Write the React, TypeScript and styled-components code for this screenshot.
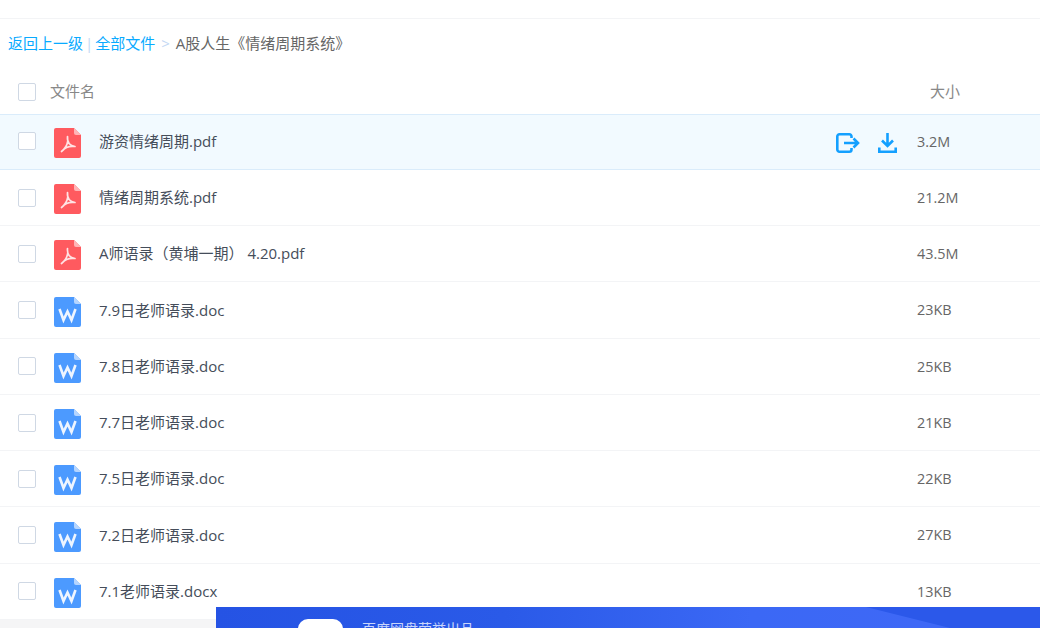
import React from 'react';
import styled, { createGlobalStyle } from 'styled-components';

const GlobalStyle = createGlobalStyle`
  html, body {
    margin: 0;
    padding: 0;
    height: 100%;
    overflow: hidden;
    background: #f5f5f6;
  }
  body {
    font-family: "Open Sans", "Noto Sans CJK SC", sans-serif;
  }
`;

const Page = styled.div`
  width: 1040px;
  height: 628px;
  overflow: hidden;
  position: relative;
`;

const Sheet = styled.div`
  background: #fff;
  height: 619px;
`;

const TopBar = styled.div`
  height: 18px;
  border-bottom: 1px solid #f3f4f6;
`;

const Crumbs = styled.div`
  height: 49px;
  padding: 0 0 2px 8px;
  box-sizing: border-box;
  display: flex;
  align-items: center;
  font-size: 15px;
  color: #666;
`;

const CrumbLink = styled.span`
  color: #09aaff;
`;

const CrumbSep = styled.span<{ $gap: number }>`
  color: #c4d8f4;
  margin: 0 ${(p) => p.$gap}px;
`;

const Row = styled.div<{ $active?: boolean }>`
  height: 56.25px;
  box-sizing: border-box;
  display: flex;
  align-items: center;
  border-bottom: 1px solid ${(p) => (p.$active ? '#daecfb' : '#f3f4f6')};
  background: ${(p) => (p.$active ? '#f2faff' : '#fff')};
  box-shadow: ${(p) => (p.$active ? 'inset 0 1px 0 #daecfb' : 'none')};
`;

const HeadRow = styled.div`
  height: 45.7px;
  display: flex;
  align-items: center;
  font-size: 15px;
  color: #888;
`;

const Check = styled.span<{ $head?: boolean }>`
  width: 18px;
  height: 18px;
  box-sizing: border-box;
  margin: ${(p) => (p.$head ? '2px' : '0')} 0 0 18px;
  border: 1.5px solid #cfd8e4;
  border-radius: 2px;
  background: #fff;
  flex: none;
`;

const HeadName = styled.span`
  margin-left: 14px;
  padding-bottom: 1px;
  flex: 1;
`;

const HeadSize = styled.span`
  width: 110px;
  padding-bottom: 1px;
`;

const FileIcon = styled.svg`
  width: 27px;
  height: 30px;
  margin: 3px 0 0 18px;
  flex: none;
`;

const FileName = styled.span`
  margin-left: 18px;
  padding-bottom: 2px;
  flex: 1;
  font-size: 15px;
  color: #454d5a;
  white-space: pre;
`;

const Actions = styled.div`
  display: flex;
  align-items: center;
  gap: 18px;
  margin: 3px 20px 0 0;
`;

const Size = styled.span`
  width: 123px;
  padding-bottom: 0.5px;
  font-size: 14.4px;
  color: #666;
`;

const Banner = styled.div`
  position: absolute;
  left: 216px;
  right: 0;
  top: 607px;
  height: 60px;
  background: linear-gradient(90deg, #2553e4 0%, #2a5ae8 35%, #3b68f5 65%, #3e68f6 85%, #3e68f6 100%);
  overflow: hidden;

  &::after {
    content: '';
    position: absolute;
    left: 650px;
    top: 0;
    right: 0;
    height: 21px;
    background: #2b58ea;
    clip-path: polygon(0 0, 100% 0, 100% 100%, 84px 100%);
  }
`;

const BannerLogo = styled.div`
  position: absolute;
  left: 82px;
  top: 12px;
  width: 45px;
  height: 45px;
  border-radius: 10px;
  background: #fff;
`;

const BannerText = styled.div`
  position: absolute;
  left: 146px;
  top: 13px;
  font-size: 14px;
  line-height: 18px;
  color: #c9d6fb;
`;

const PdfIcon = () => (
  <FileIcon viewBox="0 0 27 30">
    <path d="M2 0H20L27 7V28a2 2 0 0 1-2 2H2a2 2 0 0 1-2-2V2a2 2 0 0 1 2-2z" fill="#ff5a5f" />
    <path d="M20 0V5a2 2 0 0 0 2 2H27z" fill="#ffb4b6" />
    <path
      d="M13.500 8.500c-.3 3.500.2 5.500 1.800 7.300 1.300 1.500 3.200 2.300 5.700 2.700M13.800 13c-.6 4-2.800 7.800-6.300 10.500M8.500 22.500c2.500-3 6.500-4.800 12.500-4"
      fill="none"
      stroke="#ffe3e4"
      strokeWidth="1.700"
      strokeLinecap="round"
    />
  </FileIcon>
);

const WordIcon = () => (
  <FileIcon viewBox="0 0 27 30">
    <path d="M2 0H20L27 7V28a2 2 0 0 1-2 2H2a2 2 0 0 1-2-2V2a2 2 0 0 1 2-2z" fill="#4c9aff" />
    <path d="M20 0V5a2 2 0 0 0 2 2H27z" fill="#b5d5ff" />
    <path d="M5.500 12L9.500 23L13.500 14.500L17.500 23L21.500 12" fill="none" stroke="#eef5ff" strokeWidth="2.600" />
  </FileIcon>
);

const ShareIcon = () => (
  <svg width="24" height="20" viewBox="0 0 24 20" fill="none" stroke="#14a0ff" strokeWidth="2.600">
    <path d="M15.500 5V3.500a2.200 2.200 0 0 0-2.200-2.200H3.500a2.200 2.200 0 0 0-2.200 2.200v13a2.200 2.200 0 0 0 2.200 2.200h9.800a2.200 2.200 0 0 0 2.200-2.200V15" />
    <path d="M8 10H22M17.500 5.500L22 10l-4.500 4.500" />
  </svg>
);

const DownloadIcon = () => (
  <svg width="19" height="20" viewBox="0 0 19 20" fill="none" stroke="#14a0ff" strokeWidth="2.600">
    <path d="M9.500 0V13M4 7.500L9.500 13L15 7.500" />
    <path d="M1.300 14.500V18.700H17.700V14.500" />
  </svg>
);

const files = [
  { name: '游资情绪周期.pdf', size: '3.2M', kind: 'pdf' },
  { name: '情绪周期系统.pdf', size: '21.2M', kind: 'pdf' },
  { name: 'A师语录（黄埔一期） 4.20.pdf', size: '43.5M', kind: 'pdf' },
  { name: '7.9日老师语录.doc', size: '23KB', kind: 'doc' },
  { name: '7.8日老师语录.doc', size: '25KB', kind: 'doc' },
  { name: '7.7日老师语录.doc', size: '21KB', kind: 'doc' },
  { name: '7.5日老师语录.doc', size: '22KB', kind: 'doc' },
  { name: '7.2日老师语录.doc', size: '27KB', kind: 'doc' },
  { name: '7.1老师语录.docx', size: '13KB', kind: 'doc' },
];

export default function App() {
  return (
    <Page>
      <GlobalStyle />
      <Sheet>
        <TopBar />
        <Crumbs>
          <CrumbLink>返回上一级</CrumbLink>
          <CrumbSep $gap={2}>|</CrumbSep>
          <CrumbLink>全部文件</CrumbLink>
          <CrumbSep $gap={6}>&gt;</CrumbSep>
          A股人生《情绪周期系统》
        </Crumbs>
        <HeadRow>
          <Check $head />
          <HeadName>文件名</HeadName>
          <HeadSize>大小</HeadSize>
        </HeadRow>
        {files.map((f, i) => (
          <Row key={f.name} $active={i === 0}>
            <Check />
            {f.kind === 'pdf' ? <PdfIcon /> : <WordIcon />}
            <FileName>{f.name}</FileName>
            {i === 0 && (
              <Actions>
                <ShareIcon />
                <DownloadIcon />
              </Actions>
            )}
            <Size>{f.size}</Size>
          </Row>
        ))}
      </Sheet>
      <Banner>
        <BannerLogo />
        <BannerText>百度网盘荣誉出品</BannerText>
      </Banner>
    </Page>
  );
}
